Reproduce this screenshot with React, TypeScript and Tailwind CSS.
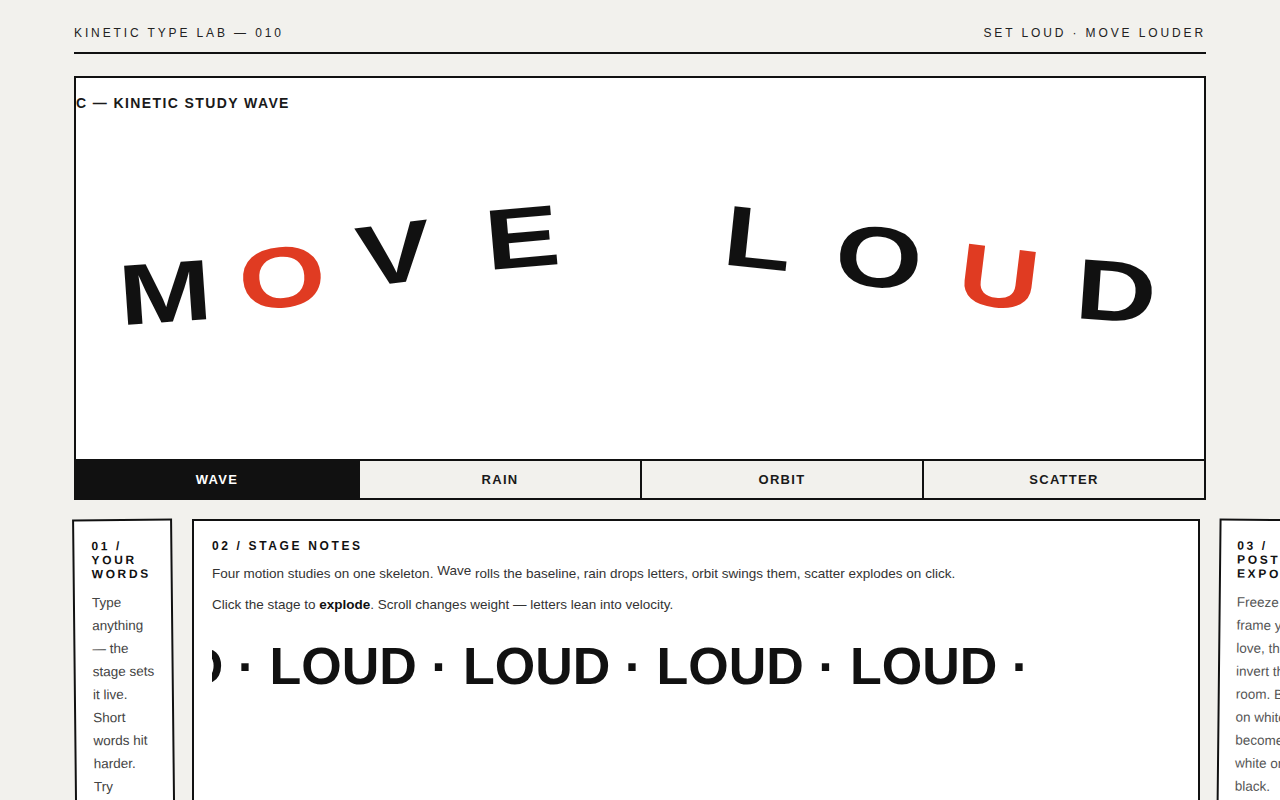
import React from "react";

const letters = [
  { ch: "M", cls: "left-[89px] top-[214px] rotate-[-4deg]", red: false },
  { ch: "O", cls: "left-[206px] top-[199px] rotate-[-5deg]", red: true },
  { ch: "V", cls: "left-[318px] top-[175px] rotate-[-7deg]", red: false },
  { ch: "E", cls: "left-[446px] top-[159px] rotate-[-5deg]", red: false },
  { ch: "L", cls: "left-[682px] top-[160px] rotate-[6deg]", red: false },
  { ch: "O", cls: "left-[803px] top-[179px] rotate-[5deg]", red: false },
  { ch: "U", cls: "left-[923px] top-[199px] rotate-[7deg]", red: true },
  { ch: "D", cls: "left-[1040px] top-[213px] rotate-[4deg]", red: false },
];

const tabs = ["WAVE", "RAIN", "ORBIT", "SCATTER"];

export default function App() {
  return (
    <div className="h-[800px] overflow-hidden bg-[#f2f1ed] font-['Liberation_Sans',Arial,sans-serif] text-[#111]">
      <div className="px-[74px]">
        <header className="flex items-center justify-between border-b-2 border-[#111] pt-[24px] pb-[10px] text-[12px] leading-[18px] tracking-[0.24em] text-[#222]">
          <span>KINETIC TYPE LAB — 010</span>
          <span>SET LOUD · MOVE LOUDER</span>
        </header>

        <section className="mt-[22px] border-2 border-[#111] bg-white">
          <div className="relative h-[381px] overflow-hidden">
            <div className="absolute left-0 top-[17px] text-[14px] font-bold leading-[16px] tracking-[0.1em] text-[#1a1a1a] whitespace-nowrap">
              C — KINETIC STUDY WAVE
            </div>
            {letters.map((l, i) => (
              <span
                key={i}
                className={`absolute ${l.cls} -translate-x-1/2 -translate-y-1/2 scale-x-[1.3] text-[86px] font-bold leading-none ${
                  l.red ? "text-[#e03b22]" : "text-[#111]"
                }`}
              >
                {l.ch}
              </span>
            ))}
          </div>
          <div className="grid grid-cols-4 border-t-2 border-[#111]">
            {tabs.map((t, i) => (
              <div
                key={t}
                className={`flex h-[37px] items-center justify-center text-[13px] font-bold tracking-[0.1em] ${
                  i === 0 ? "bg-[#111] text-white" : "border-l-2 border-[#111] bg-[#f2f1ed] text-[#1a1a1a]"
                }`}
              >
                {t}
              </div>
            ))}
          </div>
        </section>

        <section className="mt-[19px] flex items-start gap-[18px]">
          <div className="w-[100px] shrink-0 -rotate-[0.6deg] border-2 border-[#111] bg-white pl-[17px] pr-[15px] pt-[18px] pb-[20px]">
            <h3 className="mb-[10px] text-[12px] font-bold leading-[14px] tracking-[0.22em] text-[#111]">01 / YOUR WORDS</h3>
            <p className="text-[13.5px] leading-[23px] text-[#444]">
              Type anything — the stage sets it live. Short words hit harder. Try shouting. Try a name.
            </p>
          </div>

          <div className="h-[340px] w-[1008px] shrink-0 border-2 border-[#111] bg-white px-[18px] pt-[18px]">
            <h3 className="mb-[9px] text-[12px] font-bold leading-[14px] tracking-[0.22em] text-[#111]">02 / STAGE NOTES</h3>
            <p className="mb-[8px] text-[13.5px] leading-[23px] text-[#333]">
              Four motion studies on one skeleton. <span className="inline-block -translate-y-[3px]">Wave</span> rolls the baseline, rain drops letters, orbit swings them, scatter explodes on click.
            </p>
            <p className="text-[13.5px] leading-[23px] text-[#333]">
              Click the stage to <b className="text-[#111]">explode</b>. Scroll changes weight — letters lean into velocity.
            </p>
            <div className="mt-[24px] overflow-hidden whitespace-nowrap">
              <div className="ml-[-136px] text-[52px] font-bold leading-none text-[#111]">
                LOUD · LOUD · LOUD · LOUD · LOUD ·
              </div>
            </div>
          </div>

          <div className="w-[112px] shrink-0 rotate-[0.6deg] border-2 border-[#111] bg-white px-[16px] pt-[18px] pb-[20px]">
            <h3 className="mb-[10px] text-[12px] font-bold leading-[14px] tracking-[0.22em] text-[#111]">03 / POSTER EXPOSURE</h3>
            <p className="text-[13.5px] leading-[23px] text-[#555]">
              Freeze frame you love, then invert the room. Black on white becomes white on black.
            </p>
          </div>
        </section>
      </div>
    </div>
  );
}
